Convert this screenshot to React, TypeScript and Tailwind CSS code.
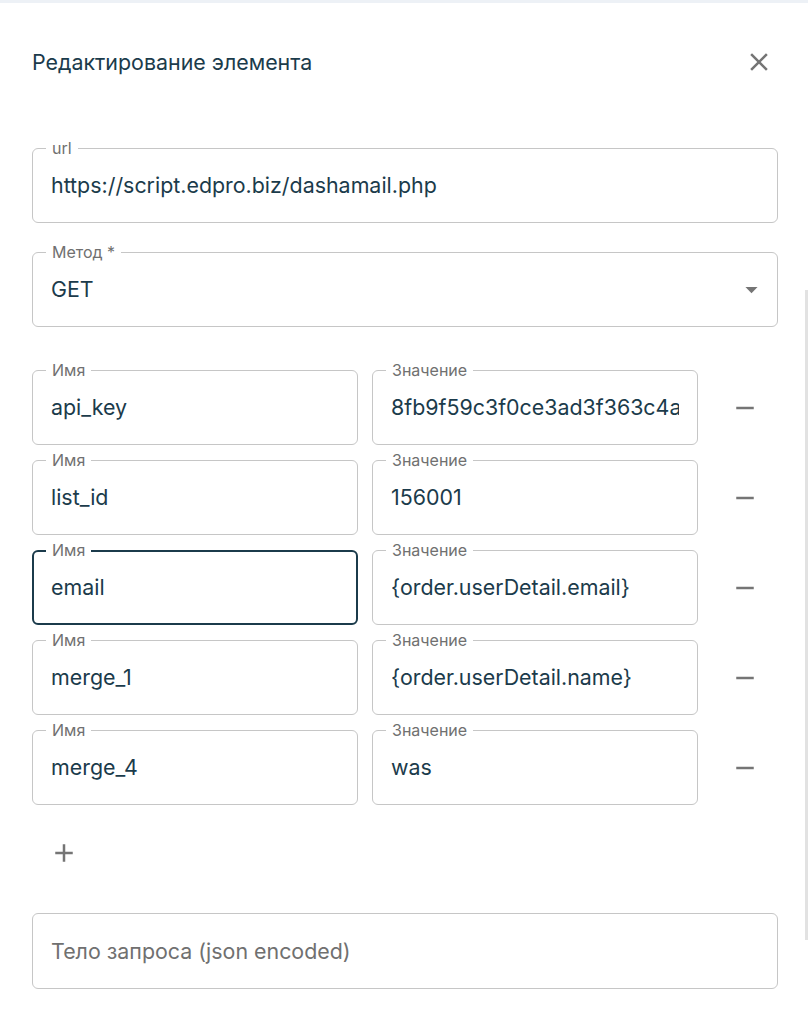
import React from "react";

const FONT = { fontFamily: "Inter, 'Noto Sans', sans-serif" };

function Field({
  label,
  value,
  focused,
  className = "",
  right,
}: {
  label: string;
  value: string;
  focused?: boolean;
  className?: string;
  right?: React.ReactNode;
}) {
  return (
    <div
      className={`relative h-[75px] rounded-[6px] ${
        focused ? "border-2 border-[#1b3b4b]" : "border border-[#c6c6c6]"
      } ${className}`}
    >
      <span
        className={`absolute ${focused ? "left-[12px] -top-[12px]" : "left-[13px] -top-[11px]"} bg-white px-[6px] text-[16px] leading-[20px] text-[#707070]`}
      >
        {label}
      </span>
      <div
        className={`flex h-full items-center ${focused ? "pl-[17px]" : "pl-[18px]"} pr-[18px]`}
      >
        <input
          readOnly
          value={value}
          className="min-w-0 flex-1 bg-transparent text-[21.4px] text-[#1b3b4b] outline-none"
          style={FONT}
        />
        {right}
      </div>
    </div>
  );
}

function MinusIcon() {
  return (
    <svg width="30" height="30" viewBox="0 0 24 24" fill="#757575">
      <path d="M19 13H5v-2h14v2z" />
    </svg>
  );
}

const rows = [
  ["api_key", "8fb9f59c3f0ce3ad3f363c4a"],
  ["list_id", "156001"],
  ["email", "{order.userDetail.email}"],
  ["merge_1", "{order.userDetail.name}"],
  ["merge_4", "was"],
];

export default function App() {
  return (
    <div className="relative min-h-[1024px] w-[808px] overflow-hidden bg-white" style={FONT}>
      <div className="h-[3px] bg-[#edf1f6]" />
      <div className="flex items-center justify-between pl-[32px] pr-[34px] pt-[44px]">
        <h2 className="text-[21.4px] leading-[30px] text-[#1b3b4b]">Редактирование элемента</h2>
        <svg width="30" height="30" viewBox="0 0 24 24" fill="#757575">
          <path d="M19 6.41 17.59 5 12 10.59 6.41 5 5 6.41 10.59 12 5 17.59 6.41 19 12 13.41 17.59 19 19 17.59 13.41 12z" />
        </svg>
      </div>

      <div className="pl-[32px] pr-[30px] pt-[71px]">
        <Field label="url" value="https://script.edpro.biz/dashamail.php" />
        <Field
          className="mt-[29px]"
          label="Метод *"
          value="GET"
          right={
            <svg className="-mr-[7px]" width="29" height="29" viewBox="0 0 24 24" fill="#757575">
              <path d="M7 10l5 5 5-5z" />
            </svg>
          }
        />

        <div className="mt-[43px] flex flex-col gap-[15px]">
          {rows.map(([k, v], i) => (
            <div key={k} className="flex items-center">
              <Field className="w-[326px]" label="Имя" value={k} focused={i === 2} />
              <Field className="ml-[14px] w-[326px]" label="Значение" value={v} />
              <div className="flex flex-1 justify-center pl-[14px]">
                <MinusIcon />
              </div>
            </div>
          ))}
        </div>

        <div className="mt-[33px] flex h-[30px] items-center pl-[17px]">
          <svg width="30" height="30" viewBox="0 0 24 24" fill="#757575">
            <path d="M19 13h-6v6h-2v-6H5v-2h6V5h2v6h6v2z" />
          </svg>
        </div>

        <div className="mt-[45px] flex h-[76px] items-center rounded-[6px] border border-[#c6c6c6] px-[18px]">
          <span className="text-[21.4px] text-[#707070]">Тело запроса (json encoded)</span>
        </div>
      </div>

      <div className="absolute right-0 top-[290px] h-[650px] w-[3px] bg-[#e2e2e2]" />
    </div>
  );
}
